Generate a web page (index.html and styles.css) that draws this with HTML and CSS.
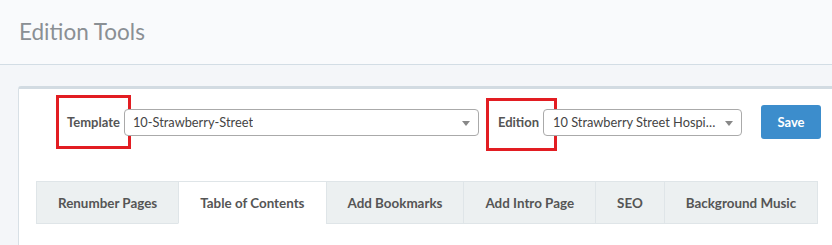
FILE: index.html
```html
<!DOCTYPE html>
<html>
<head>
<meta charset="utf-8">
<link rel="stylesheet" href="styles.css">
</head>
<body>
<header class="page-header">
  <h1 class="page-title">Edition Tools</h1>
</header>
<main class="content">
  <section class="card">
    <div class="form-row">
      <div class="field field-template">
        <span class="mark mark-template"></span>
        <label class="field-label">Template</label>
        <div class="select select-template">
          <span class="select-text">10-Strawberry-Street</span>
          <span class="caret"></span>
        </div>
      </div>
      <div class="field field-edition">
        <span class="mark mark-edition"></span>
        <label class="field-label">Edition</label>
        <div class="select select-edition">
          <span class="select-text">10 Strawberry Street Hospitality Edition</span>
          <span class="caret"></span>
        </div>
      </div>
      <button class="btn-save">Save</button>
    </div>
    <nav class="tabs">
      <div class="tab">Renumber Pages</div>
      <div class="tab active">Table of Contents</div>
      <div class="tab">Add Bookmarks</div>
      <div class="tab">Add Intro Page</div>
      <div class="tab">SEO</div>
      <div class="tab">Background Music</div>
    </nav>
  </section>
</main>
</body>
</html>
```
FILE: styles.css
```css
* { box-sizing: border-box; }
html, body { margin: 0; padding: 0; }
body {
  background: #f4f6f9;
  font-family: "Lato", "Open Sans", sans-serif;
  color: #555;
  width: 832px;
  height: 245px;
  overflow: hidden;
}
.page-header {
  height: 65px;
  background: #f9fafc;
  border-bottom: 1px solid #d3dde5;
  display: flex;
  align-items: center;
  padding-left: 19px;
}
.page-title {
  margin: 0;
  font-size: 22.5px;
  font-weight: 400;
  color: #8a8f94;
  padding-bottom: 2px;
}
.content {
  padding: 21px 0 0 18px;
}
.card {
  background: #fff;
  border-top: 3px solid #d2dbe2;
  border-left: 1px solid #d8e0e6;
  border-top-left-radius: 3px;
  height: 160px;
  padding: 16px 0 0 17px;
}
.form-row {
  display: flex;
  align-items: center;
  height: 34px;
  margin-left: 31px;
}
.field {
  position: relative;
  display: flex;
  align-items: center;
}
.field-label {
  font-size: 13px;
  font-weight: 700;
  color: #555;
  margin-right: 4px;
}
.mark {
  position: absolute;
  border: 3px solid #e21d22;
  pointer-events: none;
}
.mark-template { left: -11px; top: -14px; width: 75px; height: 54px; }
.mark-edition { left: -12px; top: -11px; width: 71px; height: 53px; }
.select {
  height: 27px;
  border: 1px solid #aaa;
  border-radius: 4px;
  background: #fff;
  display: flex;
  align-items: center;
  padding: 0 24px 0 8px;
  position: relative;
  font-size: 12.8px;
  color: #444;
}
.select-text {
  white-space: nowrap;
  overflow: hidden;
  text-overflow: ellipsis;
}
.select-template { width: 355px; }
.select-edition { width: 199px; padding-left: 9px; }
.field-edition { margin-left: 19px; }
.caret {
  position: absolute;
  right: 8px;
  top: 11px;
  width: 0;
  height: 0;
  border-left: 4px solid transparent;
  border-right: 4px solid transparent;
  border-top: 5px solid #888;
}
.btn-save {
  margin-left: 19px;
  width: 60px;
  height: 34px;
  border: none;
  border-radius: 3px;
  background: #3c8dcc;
  color: #fff;
  font-family: inherit;
  font-size: 13px;
  font-weight: 700;
  padding: 0;
}
.tabs {
  display: flex;
  margin-top: 42px;
}
.tab {
  height: 43px;
  display: flex;
  align-items: center;
  padding: 0 21px;
  background: #ecf0f1;
  border: 1px solid #dfe5e8;
  margin-left: -1px;
  font-size: 13.4px;
  font-weight: 700;
  color: #555;
  white-space: nowrap;
}
.tab:first-child { margin-left: 0; }
.tab.active {
  background: #fff;
  border-bottom-color: #fff;
}
```
